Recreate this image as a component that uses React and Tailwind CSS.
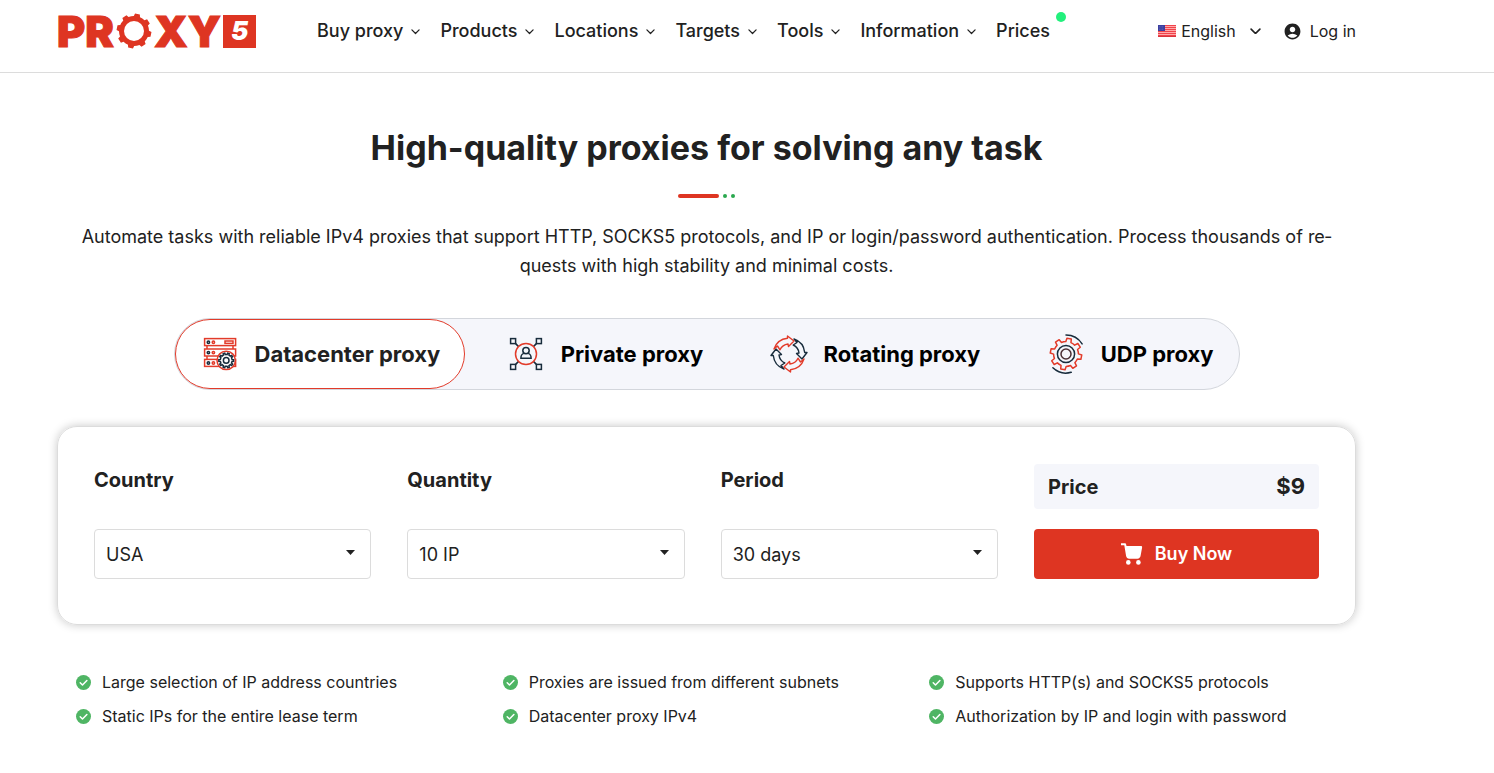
import { useState } from "react";
import { MdAccountCircle } from "react-icons/md";

const NAV_LINKS = ["Buy proxy", "Products", "Locations", "Targets", "Tools", "Information"];

const FEATURES = [
  "Large selection of IP address countries",
  "Proxies are issued from different subnets",
  "Supports HTTP(s) and SOCKS5 protocols",
  "Static IPs for the entire lease term",
  "Datacenter proxy IPv4",
  "Authorization by IP and login with password",
];

const FIELDS = [
  { id: "country", label: "Country", options: ["USA", "Germany", "France"] },
  { id: "quantity", label: "Quantity", options: ["10 IP", "25 IP", "50 IP"] },
  { id: "period", label: "Period", options: ["30 days", "60 days", "90 days"] },
];

// outline of a gear centred on cx, cy
const gearPath = (cx, cy, teeth, outer, inner, turn = 0) => {
  const step = (Math.PI * 2) / teeth;
  const at = (r, a) => `${(cx + r * Math.cos(a)).toFixed(2)} ${(cy + r * Math.sin(a)).toFixed(2)}`;
  let d = "";
  for (let i = 0; i < teeth; i++) {
    const a = i * step + turn;
    d += `${i ? "L" : "M"}${at(inner, a - step * 0.27)}L${at(outer, a - step * 0.18)}`;
    d += `L${at(outer, a + step * 0.18)}L${at(inner, a + step * 0.27)}`;
    d += `A${inner} ${inner} 0 0 1 ${at(inner, a + step * 0.73)}`;
  }
  return d + "Z";
};

function Chevron({ className }) {
  return (
    <svg viewBox="0 0 10 6" className={className} fill="none" stroke="currentColor" strokeLinecap="round" strokeLinejoin="round" aria-hidden="true">
      <path d="M1 1l4 4 4-4" />
    </svg>
  );
}

function Logo() {
  return (
    <a href="#" aria-label="Proxy5" className="flex h-9 w-[198px] items-center font-black text-[43px] leading-9 text-[#de3522]">
      <span className="[-webkit-text-stroke:1px_#de3522]">PR</span>
      <svg viewBox="0 0 36 36" className="mx-0.5 h-9 w-9 shrink-0" aria-hidden="true">
        <path d={gearPath(18, 18, 8, 17.5, 15, 0.2)} fill="currentColor" />
        <circle cx="18" cy="18" r="10" fill="#fff" />
      </svg>
      <span className="[-webkit-text-stroke:1px_#de3522]">XY</span>
      <span className="ml-0.5 flex h-[33px] w-[33px] shrink-0 items-center justify-center bg-[#de3522] text-[26px] italic text-white">5</span>
    </a>
  );
}

function Flag() {
  return (
    <svg viewBox="0 0 18 12" className="h-3 w-[18px]" aria-hidden="true">
      <rect width="18" height="12" fill="#ffa9a9" />
      {[0, 2, 4, 6, 8, 10].map((y) => (
        <rect key={y} y={y} width="18" height="1" fill="#f0434b" />
      ))}
      <rect y="11" width="18" height="1" fill="#d8343c" />
      <rect width="7" height="6" fill="#3b3fa0" />
      <path d="M1 1.5h5M1 3h5M1 4.5h5" stroke="#6d71bd" strokeWidth="0.6" strokeDasharray="0.8 0.8" />
    </svg>
  );
}

function CartIcon() {
  return (
    <svg viewBox="0 0 22 22" className="h-[22px] w-[22px]" fill="currentColor" aria-hidden="true">
      <path d="M0 .3h4.200c.4 0 .7.300.8.700L5.500 3H20c.8 0 1.300.6 1.100 1.400L19.600 12.800c-.3 1.700-1.500 2.900-3.200 2.900H8.200c-1.600 0-2.800-1-3.100-2.600L3.300 2.200H0z" />
      <circle cx="7.3" cy="19.4" r="2.3" />
      <circle cx="17.4" cy="19.4" r="2.3" />
    </svg>
  );
}

function DatacenterIcon() {
  return (
    <svg viewBox="-4 -4 40 40" className="h-10 w-10 shrink-0" fill="none" stroke="#e23b2a" strokeWidth="1.5" aria-hidden="true">
      <rect x="0.6" y="0.6" width="31" height="7" />
      <rect x="0.6" y="11" width="31" height="7" />
      <rect x="0.6" y="21.4" width="31" height="7" />
      <path d="M3 7.6V11M29 7.6V11M3 18v3.4M29 18v3.4" />
      <rect x="21" y="3" width="8" height="2.4" />
      <circle cx="9.4" cy="4.2" r="1.2" />
      <circle cx="9.4" cy="14.6" r="1.2" />
      <circle cx="9.4" cy="25" r="1.2" />
      <g stroke="#182c3c">
        <circle cx="4.4" cy="4.2" r="1.2" />
        <circle cx="4.4" cy="14.6" r="1.2" />
        <circle cx="4.4" cy="25" r="1.2" />
      </g>
      <circle cx="22.2" cy="22.4" r="9.2" fill="#fff" />
      <path d={gearPath(22.2, 22.4, 10, 7.4, 5.9)} stroke="#182c3c" />
      <circle cx="22.2" cy="22.4" r="2.8" stroke="#182c3c" />
    </svg>
  );
}

function PrivateIcon() {
  return (
    <svg viewBox="-4 -4 40 40" className="h-10 w-10 shrink-0" fill="none" stroke="#182c3c" strokeWidth="1.5" aria-hidden="true">
      <rect x="0.6" y="0.6" width="5" height="5" />
      <rect x="26.4" y="0.6" width="5" height="5" />
      <rect x="0.6" y="26.4" width="5" height="5" />
      <rect x="26.4" y="26.4" width="5" height="5" />
      <path d="M5.6 5.6l3 3M26.4 5.6l-3 3M5.6 26.4l3-3M26.4 26.4l-3-3" />
      <circle cx="16" cy="16" r="10.5" stroke="#e23b2a" />
      <circle cx="16" cy="12.6" r="3.2" />
      <path d="M13.8 15.4c-2 .6-2.900 2-2.900 4.800h10.200c0-2.800-.9-4.200-2.900-4.800" />
    </svg>
  );
}

function RotatingIcon() {
  const arrow = "M-15-5A16 16 0 0 1-1.500-15.700V-18L5-13-.5-7.500-1-10A10 10 0 0 0-9-4.200L-11.500-8Z";
  return (
    <svg viewBox="-20 -20 40 40" className="h-10 w-10 shrink-0" fill="none" strokeWidth="1.4" strokeLinejoin="round" aria-hidden="true">
      <path d={arrow} stroke="#182c3c" transform="rotate(90)" />
      <path d={arrow} stroke="#182c3c" transform="rotate(270)" />
      <path d={arrow} stroke="#e23b2a" />
      <path d={arrow} stroke="#e23b2a" transform="rotate(180)" />
    </svg>
  );
}

function UdpIcon() {
  return (
    <svg viewBox="-20 -20 40 40" className="h-10 w-10 shrink-0" fill="none" stroke="#182c3c" strokeWidth="1.5" strokeLinecap="round" strokeLinejoin="round" aria-hidden="true">
      <path d={gearPath(0, 0, 8, 15.8, 12.4, 0.2)} stroke="#e23b2a" />
      <circle r="8.6" />
      <circle r="5" stroke="#4a2f35" />
      <path d="M0-19A19 19 0 0 1 16.100-10.100M-13.100 13.800A19 19 0 0 0 5.200 18.300" />
    </svg>
  );
}

const TABS = [
  { name: "Datacenter proxy", Icon: DatacenterIcon },
  { name: "Private proxy", Icon: PrivateIcon },
  { name: "Rotating proxy", Icon: RotatingIcon },
  { name: "UDP proxy", Icon: UdpIcon },
];

function Header() {
  return (
    <header className="border-b border-[#dcdcdc]">
      <div className="flex h-18 items-start pt-[13px] pr-[138px] pl-[57px]">
        <Logo />
        <nav className="ml-[62px] flex h-9 items-center gap-5 text-lg font-medium">
          {NAV_LINKS.map((link) => (
            <a key={link} href="#" className="flex items-center gap-2 whitespace-nowrap">
              {link}
              <Chevron className="mt-0.5 w-[9px] stroke-[1.4]" />
            </a>
          ))}
          <a href="#" className="relative">
            Prices
            <span className="absolute -top-[5px] -right-4 h-2.5 w-2.5 rounded-full bg-[#22f07c]" />
          </a>
        </nav>
        <div className="ml-auto flex h-9 items-center text-base">
          <button type="button" className="flex items-center">
            <Flag />
            <span className="ml-[5px]">English</span>
            <Chevron className="ml-[14px] w-[11px] stroke-[1.5]" />
          </button>
          <a href="#" className="ml-[22px] flex items-center gap-2">
            <MdAccountCircle className="h-[19px] w-[19px]" />
            Log in
          </a>
        </div>
      </div>
    </header>
  );
}

function Field({ id, label, options }) {
  return (
    <div className="flex flex-col justify-between">
      <label htmlFor={id} className="text-xl leading-8 font-bold">{label}</label>
      <div className="relative">
        <select id={id} className="h-[50px] w-full appearance-none rounded border border-[#dcdcdc] bg-white px-[11px] pt-0.5 text-lg">
          {options.map((option) => (
            <option key={option}>{option}</option>
          ))}
        </select>
        <svg viewBox="0 0 9 5" className="pointer-events-none absolute top-[21px] right-4 h-[5px] w-[9px]" aria-hidden="true">
          <path d="M0 0h9L4.500 5z" fill="#222" />
        </svg>
      </div>
    </div>
  );
}

function App() {
  const [active, setActive] = useState("Datacenter proxy");

  return (
    <div className="bg-white font-[Inter,sans-serif] text-[#212121]">
      <Header />
      <main className="pr-[138px] pb-10 pl-[57px]">
        <h1 className="pt-[50px] text-center text-[34px] leading-[50px] font-bold">
          High-quality proxies for solving any task
        </h1>
        <div className="mt-[21px] flex items-center justify-center gap-1">
          <span className="h-1 w-[41px] rounded-full bg-[#de3522]" />
          <span className="h-1 w-1 rounded-full bg-[#2aa84f]" />
          <span className="h-1 w-1 rounded-full bg-[#2aa84f]" />
        </div>
        <p className="mt-6 text-center text-lg leading-[29px]">
          Automate tasks with reliable IPv4 proxies that support HTTP, SOCKS5 protocols, and IP or login/password authentication. Process thousands of re&shy;quests with high stability and minimal costs.
        </p>

        <div className="mx-auto mt-[38px] flex w-full max-w-[1066px] justify-between rounded-full border border-[#d3d6dc] bg-[#f5f6fb]">
          {TABS.map(({ name, Icon }) => (
            <button
              key={name}
              type="button"
              onClick={() => setActive(name)}
              className={`flex h-[70px] items-center gap-[15px] rounded-full border px-6 text-[22px] font-bold whitespace-nowrap ${
                active === name ? "border-[#e23b2a] bg-white" : "border-transparent text-black"
              }`}
            >
              <Icon />
              {name}
            </button>
          ))}
        </div>

        <form
          onSubmit={(e) => e.preventDefault()}
          className="mt-9 grid grid-cols-[1fr_1fr_1fr_285px] gap-9 rounded-[20px] border border-[#dcdcdc] px-9 pt-[37px] pb-[45px] shadow-[0_0_10px_rgba(0,0,0,0.22)]"
        >
          {FIELDS.map((field) => (
            <Field key={field.id} {...field} />
          ))}
          <div className="flex flex-col gap-5">
            <div className="flex h-[45px] items-center justify-between rounded bg-[#f5f6fb] px-[14px] text-xl font-bold">
              <span>Price</span>
              <span className="text-[22px]">$9</span>
            </div>
            <button type="submit" className="flex h-[50px] items-center justify-center gap-3 rounded bg-[#de3522] text-lg font-semibold text-white">
              <CartIcon />
              Buy Now
            </button>
          </div>
        </form>

        <ul className="mt-10 grid grid-cols-3 pl-[19px]">
          {FEATURES.map((feature) => (
            <li key={feature} className="flex h-[34px] items-center gap-[11px] text-base">
              <svg viewBox="0 0 16 16" className="h-[15px] w-[15px] shrink-0" aria-hidden="true">
                <circle cx="8" cy="8" r="8" fill="#4fb564" />
                <path d="M4.500 8.300l2.400 2.400 4.700-4.900" fill="none" stroke="#fff" strokeWidth="1.6" strokeLinecap="round" strokeLinejoin="round" />
              </svg>
              {feature}
            </li>
          ))}
        </ul>
      </main>
    </div>
  );
}

export default App;
